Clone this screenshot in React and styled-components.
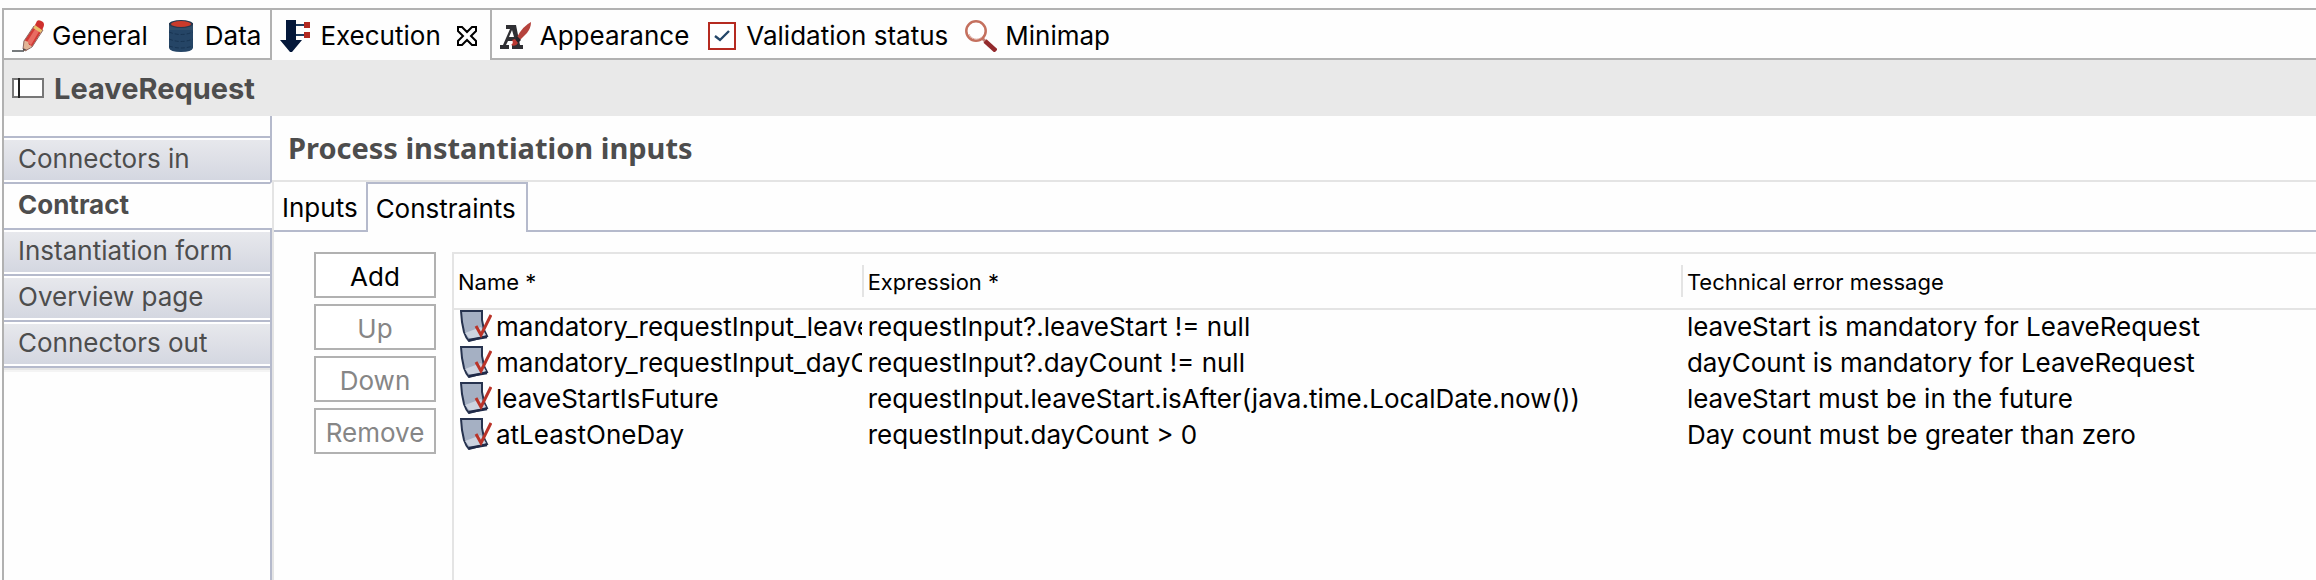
import React, { useState } from 'react';
import styled, { createGlobalStyle } from 'styled-components';

const color = {
  page: '#fefefe',
  frame: '#b1b1b1',
  accent: '#b5bacc',
  hairline: '#e4e4e4',
  strip: '#e9e9e9',
  heading: '#4d4d4d',
  disabled: '#868686',
};

const GlobalStyle = createGlobalStyle`
  *, *::before, *::after { box-sizing: border-box; }
  body {
    margin: 0;
    background: ${color.page};
    color: #000;
    font-family: Inter, "Liberation Sans", sans-serif;
    font-size: 26px;
    line-height: 36px;
  }
  button { font: inherit; color: inherit; }
`;

const View = styled.main`
  display: flex;
  flex-direction: column;
  min-height: 100vh;
  padding: 8px 0 0 2px;
`;

const Frame = styled.div`
  flex: 1;
  display: flex;
  flex-direction: column;
  border-top: 2px solid ${color.frame};
  border-left: 2px solid ${color.frame};
`;

const ViewTabs = styled.div`
  display: flex;
  height: 50px;
  &::after {
    content: '';
    flex: 1;
    border-bottom: 2px solid ${color.frame};
  }
`;

const ViewTab = styled.button`
  display: flex;
  align-items: center;
  gap: 8px;
  padding: 4px 9px 0 8px;
  border: 0 solid ${color.frame};
  border-width: ${(p) => (p.$selected ? '0 2px' : '0 0 2px')};
  padding-bottom: ${(p) => (p.$selected ? '2px' : '0')};
  background: none;
  white-space: nowrap;
  svg { flex: none; }
`;

const CloseMark = styled.span`
  display: flex;
  margin: 0 4px 0 8px;
`;

const TitleStrip = styled.header`
  display: flex;
  align-items: center;
  gap: 10px;
  height: 56px;
  padding: 0 8px;
  background: ${color.strip};
`;

const Title = styled.h1`
  margin: 0;
  padding-top: 2px;
  color: ${color.heading};
  font-size: 29px;
  font-weight: 700;
`;

const Body = styled.div`
  flex: 1;
  display: flex;
`;

const Sections = styled.nav`
  flex: none;
  display: flex;
  flex-direction: column;
  width: 268px;
  &::before {
    content: '';
    height: 20px;
    border-right: 2px solid ${color.accent};
  }
  &::after {
    content: '';
    flex: 1;
    border-top: 2px solid ${color.accent};
    border-right: 2px solid ${color.accent};
    background: linear-gradient(#e6e6e6 2px, #f4f4f4 2px, #f4f4f4 4px, transparent 4px);
  }
`;

const Section = styled.button`
  height: 46px;
  padding: 0 0 2px 14px;
  border: 0;
  border-top: 2px solid ${color.accent};
  border-right: 2px solid ${(p) => (p.$selected ? 'transparent' : color.accent)};
  background: ${(p) => (p.$selected ? 'none' : 'linear-gradient(#e8e9ed, #d3d6e0)')};
  box-shadow: ${(p) => (p.$selected ? 'none' : 'inset 0 2px #fff, inset 0 -2px #fff')};
  color: ${color.heading};
  font-weight: ${(p) => (p.$selected ? 700 : 400)};
  text-align: left;
`;

const Page = styled.section`
  flex: 1;
  min-width: 0;
  display: flex;
  flex-direction: column;
`;

const PageHeading = styled.h2`
  margin: 0;
  padding: 14px 16px;
  color: ${color.heading};
  font-family: "Noto Sans", "Open Sans", sans-serif;
  font-size: 29px;
  font-weight: 700;
`;

const PageContent = styled.div`
  flex: 1;
  display: flex;
  flex-direction: column;
  border-top: 2px solid ${color.hairline};
  border-left: 2px solid ${color.hairline};
`;

const InnerTabs = styled.div`
  display: flex;
  height: 50px;
  &::after {
    content: '';
    flex: 1;
    border-bottom: 2px solid ${color.accent};
  }
`;

const InnerTab = styled.button`
  padding: ${(p) => (p.$selected ? '4px 10px 2px 8px' : '6px 8px 2px')};
  border: 0 solid ${color.accent};
  border-width: ${(p) => (p.$selected ? '2px 2px 0' : '0 0 2px')};
  background: none;
`;

const Workspace = styled.div`
  flex: 1;
  display: flex;
  gap: 16px;
  padding: 20px 0 0 40px;
`;

const Actions = styled.div`
  flex: none;
  display: flex;
  flex-direction: column;
  gap: 6px;
  width: 122px;
`;

const Action = styled.button`
  height: 46px;
  padding: 4px 0 0;
  border: 2px solid ${color.frame};
  background: #fff;
  &:disabled { color: ${color.disabled}; }
`;

const TableArea = styled.div`
  flex: 1;
  min-width: 0;
  border-top: 2px solid ${color.hairline};
  border-left: 2px solid ${color.hairline};
`;

const Table = styled.table`
  width: 100%;
  table-layout: fixed;
  border-spacing: 0;
`;

const Column = styled.col`
  width: ${(p) => p.$width};
`;

const HeadCell = styled.th`
  height: 56px;
  padding: 0;
  border-bottom: 2px solid ${color.hairline};
  font-size: 22px;
  font-weight: 400;
  line-height: 32px;
  text-align: left;
`;

const HeadLabel = styled.span`
  display: block;
  height: 32px;
  padding: 1px 0 0 4px;
  border-right: 2px solid ${(p) => (p.$divided ? color.hairline : 'transparent')};
`;

const Cell = styled.td`
  height: 36px;
  padding: 0 0 0 4px;
  overflow: hidden;
  line-height: 34px;
  vertical-align: top;
  white-space: nowrap;
`;

const NameCell = styled(Cell)`
  padding: 0 2px 0 6px;
`;

const ConstraintName = styled.div`
  display: flex;
  gap: 4px;
  overflow: hidden;
  svg { flex: none; }
`;

const Icon = ({ children, size = 32 }) => (
  <svg width={size} height={size} viewBox={`0 0 ${size} ${size}`} aria-hidden="true">
    {children}
  </svg>
);

const PencilIcon = () => (
  <Icon>
    <path d="M0 31h12" stroke="#777b7d" strokeWidth="2" />
    <path d="M12 20L20 25L15 30L11 31Z" fill="#e7c3a4" />
    <path d="M23 5L31 9L20 27L12 21Z" fill="#d23a35" />
    <path d="M25 6L29 8L19 25L15 22Z" fill="#e86c62" />
    <path d="M12 20L16 22L17 25L20 26L14 31L11 31Z" fill="#e3b596" />
    <path d="M11 28L15 30L11 31Z" fill="#504b4b" />
    <path d="M23 5L31 10L29 13L21 8Z" fill="#e8bf6c" />
    <path d="M25 1Q27-1 31 2Q33 4 31 8L30 10L23 5Z" fill="#cf302d" />
    <path d="M22 6L12 21L11 29M31 10L20 27L13 31" stroke="#8f6862" fill="none" />
  </Icon>
);

const DatabaseIcon = () => (
  <Icon>
    <path d="M4 3V28Q5 32 16 32Q27 32 28 28V3Z" fill="#254566" />
    <path d="M4 5Q16 11 28 5V10H4Z" fill="#314e69" />
    <ellipse cx="16" cy="4" rx="12" ry="4" fill="#27384d" />
    <ellipse cx="16" cy="4" rx="10" ry="3" fill="#cb3b2b" />
    <path d="M4 12Q16 17 28 12M4 19Q16 24 28 19M4 26Q16 30 28 26" stroke="#183452" strokeWidth="1" strokeDasharray="4 2" fill="none" />
  </Icon>
);

const ExecutionIcon = () => (
  <Icon>
    <path d="M14 5H24M14 15H24" stroke="#1d3d60" strokeWidth="2" />
    <path d="M6 0H16V20H22L12 32H10L0 20H6Z" fill="#04183a" />
    <path d="M24 2H30V8H24ZM24 12H30V18H24Z" fill="#b12a22" />
  </Icon>
);

const AppearanceIcon = () => (
  <Icon>
    <path d="M6 5H16L20 25H23V29H12V25H15L14 21H8L6 25H9V29H0V25H3L10 9H6ZM9 17H14L12 10Z" fill="#2f2f33" fillRule="evenodd" />
    <path d="M31 2Q31 8 27 13L20 20L17 17Q23 6 31 2Z" fill="#b5423c" />
    <path d="M17 16L21 20L18 23L15 20Z" fill="#25242a" />
    <path d="M15 19L18 23Q16 27 11 25Q14 23 12 20Z" fill="#bd3a33" />
  </Icon>
);

const ValidationIcon = () => (
  <Icon>
    <rect x="3" y="3" width="26" height="26" fill="#fff" stroke="#b52a20" strokeWidth="2" />
    <path d="M9 16L14 20L23 11" fill="none" stroke="#234668" strokeWidth="2.4" />
  </Icon>
);

const MagnifierIcon = () => (
  <Icon>
    <path d="M17 18L21 22" stroke="#c08078" strokeWidth="3" />
    <path d="M20 21L31 31" stroke="#932a2d" strokeWidth="4.5" />
    <circle cx="11" cy="11" r="9.7" fill="#fff" stroke="#c4705e" strokeWidth="2.5" />
    <path d="M4 14A8 8 0 0 0 17 17" fill="none" stroke="#dba99e" />
  </Icon>
);

const CloseIcon = () => (
  <Icon size={20}>
    <path d="M1 1H5L10 6L15 1H19V5L14 10L19 15V19H15L10 14L5 19H1V15L6 10L1 5Z" fill="#fff" stroke="#000" strokeWidth="2" />
  </Icon>
);

const PoolIcon = () => (
  <svg width="32" height="20" viewBox="0 0 32 20" aria-hidden="true">
    <rect x="1" y="1" width="30" height="18" fill="#fff" stroke="#777" strokeWidth="2" />
    <path d="M7 0V20" stroke="#222" strokeWidth="2" />
  </svg>
);

const ConstraintIcon = () => (
  <Icon>
    <path d="M1 1H22V10L24 20L27 26L9 31Q6 28 4 22L2 12Z" fill="#a5b0c3" stroke="#27334f" strokeWidth="2" />
    <path d="M5 23L21 17L26 25L10 29Z" fill="#ccd3e0" />
    <path d="M9 30L27 27" stroke="#202a48" strokeWidth="2.6" />
    <path d="M16 16L21 25L31 5" fill="none" stroke="#ba3328" strokeWidth="3" />
  </Icon>
);

const views = [
  { label: 'General', icon: PencilIcon },
  { label: 'Data', icon: DatabaseIcon },
  { label: 'Execution', icon: ExecutionIcon },
  { label: 'Appearance', icon: AppearanceIcon },
  { label: 'Validation status', icon: ValidationIcon },
  { label: 'Minimap', icon: MagnifierIcon },
];

const sections = ['Connectors in', 'Contract', 'Instantiation form', 'Overview page', 'Connectors out'];

const constraints = [
  ['mandatory_requestInput_leaveStart', 'requestInput?.leaveStart != null', 'leaveStart is mandatory for LeaveRequest'],
  ['mandatory_requestInput_dayCount', 'requestInput?.dayCount != null', 'dayCount is mandatory for LeaveRequest'],
  ['leaveStartIsFuture', 'requestInput.leaveStart.isAfter(java.time.LocalDate.now())', 'leaveStart must be in the future'],
  ['atLeastOneDay', 'requestInput.dayCount > 0', 'Day count must be greater than zero'],
];

export default function App() {
  const [view, setView] = useState('Execution');
  const [section, setSection] = useState('Contract');
  const [tab, setTab] = useState('Constraints');

  return (
    <>
      <GlobalStyle />
      <View>
        <Frame>
          <ViewTabs role="tablist">
            {views.map(({ label, icon: Glyph }) => {
              const selected = view === label;
              return (
                <ViewTab key={label} role="tab" aria-selected={selected} $selected={selected} onClick={() => setView(label)}>
                  <Glyph />
                  {label}
                  {selected && <CloseMark><CloseIcon /></CloseMark>}
                </ViewTab>
              );
            })}
          </ViewTabs>
          <TitleStrip>
            <PoolIcon />
            <Title>LeaveRequest</Title>
          </TitleStrip>
          <Body>
            <Sections>
              {sections.map((name) => (
                <Section key={name} $selected={section === name} onClick={() => setSection(name)}>
                  {name}
                </Section>
              ))}
            </Sections>
            <Page>
              <PageHeading>Process instantiation inputs</PageHeading>
              <PageContent>
                <InnerTabs role="tablist">
                  {['Inputs', 'Constraints'].map((name) => (
                    <InnerTab key={name} role="tab" aria-selected={tab === name} $selected={tab === name} onClick={() => setTab(name)}>
                      {name}
                    </InnerTab>
                  ))}
                </InnerTabs>
                <Workspace>
                  <Actions>
                    <Action>Add</Action>
                    <Action disabled>Up</Action>
                    <Action disabled>Down</Action>
                    <Action disabled>Remove</Action>
                  </Actions>
                  <TableArea>
                    <Table>
                      <colgroup>
                        <Column $width="22%" />
                        <Column $width="44%" />
                        <Column $width="34%" />
                      </colgroup>
                      <thead>
                        <tr>
                          <HeadCell scope="col"><HeadLabel $divided>Name *</HeadLabel></HeadCell>
                          <HeadCell scope="col"><HeadLabel $divided>Expression *</HeadLabel></HeadCell>
                          <HeadCell scope="col"><HeadLabel>Technical error message</HeadLabel></HeadCell>
                        </tr>
                      </thead>
                      <tbody>
                        {constraints.map(([name, expression, message]) => (
                          <tr key={name}>
                            <NameCell>
                              <ConstraintName><ConstraintIcon />{name}</ConstraintName>
                            </NameCell>
                            <Cell>{expression}</Cell>
                            <Cell>{message}</Cell>
                          </tr>
                        ))}
                      </tbody>
                    </Table>
                  </TableArea>
                </Workspace>
              </PageContent>
            </Page>
          </Body>
        </Frame>
      </View>
    </>
  );
}
